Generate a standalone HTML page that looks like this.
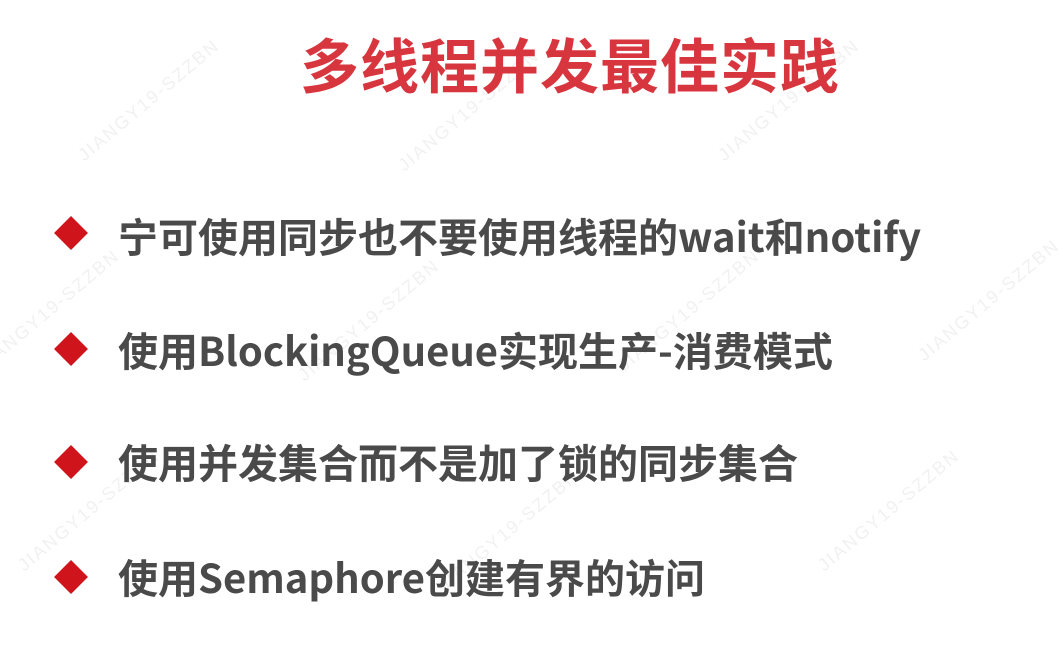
<!DOCTYPE html>
<html><head><meta charset="utf-8"><style>
body{margin:0;width:1063px;height:652px;background:#fff;overflow:hidden;position:relative;font-family:"Liberation Sans","Noto Sans CJK SC",sans-serif;}
.wm{position:absolute;color:#f1f1f1;font-size:18px;transform:rotate(-40deg);white-space:nowrap;letter-spacing:2px;}
.t{position:absolute;left:300px;top:31px;font-size:59px;font-weight:bold;color:#d8363f;letter-spacing:1px;white-space:nowrap;line-height:74px;}
.b{position:absolute;left:118px;font-family:"Noto Sans CJK SC",sans-serif;font-size:40px;font-weight:bold;color:#4a4a4a;white-space:nowrap;line-height:48px;}
.d{position:absolute;left:59px;width:24px;height:24px;background:#d0141b;transform:rotate(45deg);}
</style></head><body>
<div class="wm" style="left:60px;top:90px">JIANGY19-SZZBN</div>
<div class="wm" style="left:380px;top:100px">JIANGY19-SZZBN</div>
<div class="wm" style="left:700px;top:90px">JIANGY19-SZZBN</div>
<div class="wm" style="left:-40px;top:300px">JIANGY19-SZZBN</div>
<div class="wm" style="left:280px;top:310px">JIANGY19-SZZBN</div>
<div class="wm" style="left:600px;top:300px">JIANGY19-SZZBN</div>
<div class="wm" style="left:900px;top:290px">JIANGY19-SZZBN</div>
<div class="wm" style="left:0px;top:500px">JIANGY19-SZZBN</div>
<div class="wm" style="left:420px;top:520px">JIANGY19-SZZBN</div>
<div class="wm" style="left:800px;top:500px">JIANGY19-SZZBN</div>
<div class="t">多线程并发最佳实践</div>
<div class="d" style="top:221px"></div><div class="b" style="top:211px">宁可使用同步也不要使用线程的wait和notify</div>
<div class="d" style="top:337px"></div><div class="b" style="top:325px">使用BlockingQueue实现生产-消费模式</div>
<div class="d" style="top:450px"></div><div class="b" style="top:437px">使用并发集合而不是加了锁的同步集合</div>
<div class="d" style="top:565px"></div><div class="b" style="top:552px">使用Semaphore创建有界的访问</div>
</body></html>
